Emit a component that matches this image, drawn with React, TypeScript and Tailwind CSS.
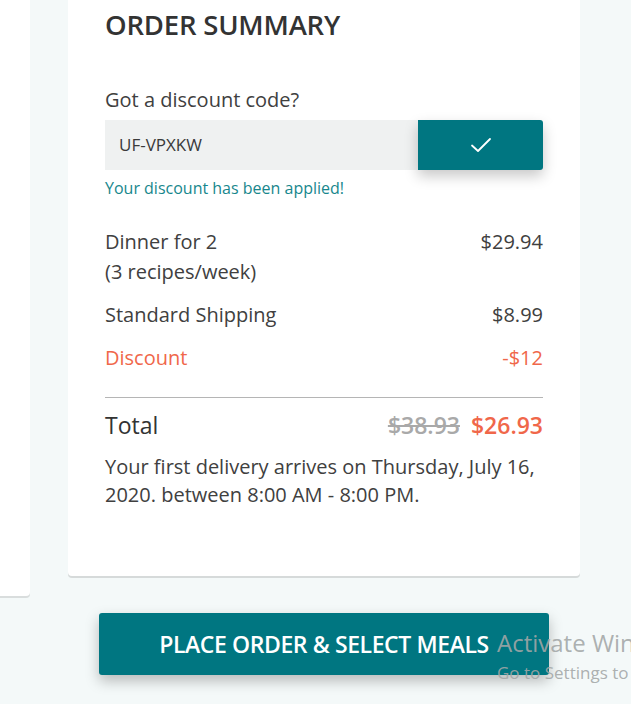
import React from "react";

const Row = ({
  label,
  value,
  className = "",
}: {
  label: React.ReactNode;
  value: string;
  className?: string;
}) => (
  <div className={`flex justify-between text-[20px] leading-[30px] ${className}`}>
    <div>{label}</div>
    <div>{value}</div>
  </div>
);

const App = () => {
  return (
    <div
      className="relative h-[704px] w-[631px] overflow-hidden bg-[#f4f9f9] text-[#404040]"
      style={{ fontFamily: '"Open Sans", "Noto Sans", sans-serif' }}
    >
      <div className="flex items-start">
        {/* left panel, mostly off screen */}
        <div className="h-[596px] w-[30px] rounded-br-[4px] bg-white shadow-[0_2px_0_#d9dddd]" />

        {/* order summary card */}
        <div className="ml-[38px] h-[576px] w-[512px] rounded-b-[4px] bg-white px-[37px] pt-[6px] shadow-[0_2px_0_#d6dada]">
          <h1 className="text-[27.5px] font-semibold leading-[38px] tracking-[-0.2px] text-[#333]">
            ORDER SUMMARY
          </h1>

          <p className="mt-[43px] text-[20px] leading-[26px]">Got a discount code?</p>

          <div className="mt-[7px] flex h-[50px]">
            <div className="flex flex-1 items-center bg-[#eff1f1] pl-[14px] text-[17px] text-[#3a3a3a]">
              UF-VPXKW
            </div>
            <button className="flex w-[125px] items-center justify-center rounded-r-[3px] bg-[#007681] shadow-[0_6px_14px_rgba(0,0,0,0.22)]">
              <svg width="22" height="16" viewBox="0 0 22 16" fill="none">
                <path
                  d="M2 8.5 L8 14 L20 2"
                  stroke="white"
                  strokeWidth="1.8"
                  strokeLinecap="round"
                  strokeLinejoin="round"
                />
              </svg>
            </button>
          </div>

          <p className="mt-[7px] text-[16px] leading-[22px] text-[#17878d]">
            Your discount has been applied!
          </p>

          <div className="mt-[28px]">
            <Row
              label={
                <>
                  Dinner for 2
                  <br />
                  (3 recipes/week)
                </>
              }
              value="$29.94"
            />
            <Row label="Standard Shipping" value="$8.99" className="mt-[13px]" />
            <Row label="Discount" value="-$12" className="mt-[13px] text-[#f0674a]" />
          </div>

          <div className="mt-[24px] h-px bg-[#b5b5b5]" />

          <div className="mt-[11px] flex items-center justify-between">
            <div className="text-[23px] leading-[32px] text-[#333]">Total</div>
            <div className="flex gap-[11px] text-[23px] font-semibold leading-[32px]">
              <span className="text-[#a9a9a9] line-through">$38.93</span>
              <span className="text-[#f0674a]">$26.93</span>
            </div>
          </div>

          <p className="mt-[12px] text-[20px] leading-[28px]">
            Your first delivery arrives on Thursday, July 16, 2020. between 8:00 AM - 8:00 PM.
          </p>
        </div>
      </div>

      <button className="ml-[99px] mt-[17px] flex h-[62px] w-[450px] items-center justify-center rounded-[3px] bg-[#007681] text-[23px] font-semibold tracking-[-0.4px] text-white shadow-[0_6px_14px_rgba(0,0,0,0.25)]">
        PLACE ORDER &amp; SELECT MEALS
      </button>

      {/* windows watermark */}
      <div className="pointer-events-none absolute left-[497px] top-[627px] whitespace-nowrap text-[#a3a7a7]/90">
        <div className="text-[24px] leading-[32px]">Activate Windows</div>
        <div className="text-[17px] leading-[28px]">Go to Settings to activate Windows.</div>
      </div>
    </div>
  );
};

export default App;
